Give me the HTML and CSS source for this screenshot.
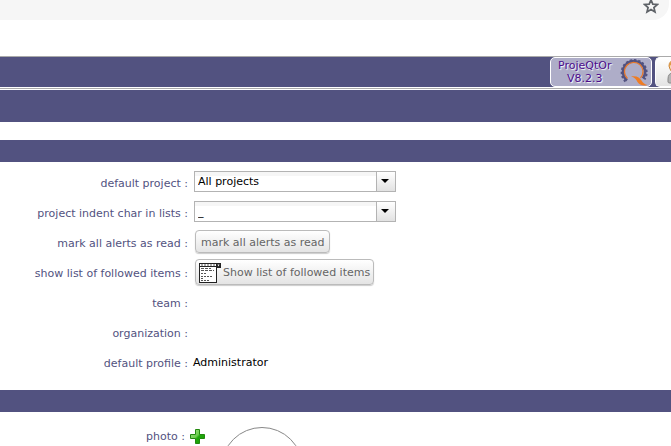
FILE: index.html
```
<!DOCTYPE html>
<html lang="en">
<head>
  <meta charset="UTF-8" />
  <meta name="viewport" content="width=device-width, initial-scale=1.0"/>
  <title>User parameters</title>
  <link rel="stylesheet" href="styles.css">
</head>
<body>
  <div class="address-row">
    <div class="address-bar">
      <button class="star" aria-label="Bookmark this page">
        <svg width="16" height="16" viewBox="0 0 16 16"><path d="M8 1.8 L9.8 6.1 L14.4 6.5 L10.9 9.5 L12 14 L8 11.6 L4 14 L5.1 9.5 L1.6 6.5 L6.2 6.1 Z" fill="none" stroke="#5f6368" stroke-width="1.7"/></svg>
      </button>
    </div>
  </div>

  <header class="top-bar">
    <a class="about" href="#">
      <span class="about-text">ProjeQtOr<br>V8.2.3</span>
      <svg class="about-logo" width="28" height="28" viewBox="0 0 28 28">
        <path d="M7 22.500 A11 11 0 1 1 23 20.500" fill="none" stroke="#525280" stroke-width="2.600"/>
        <path d="M5.500 23.500 A12.500 12.500 0 1 1 24.500 21.500" fill="none" stroke="#525280" stroke-width="2" stroke-dasharray="2.300 1.900"/>
        <path d="M7.500 20.500 A9.300 9.300 0 1 1 20.500 20" fill="none" stroke="#e8782a" stroke-width="1.300"/>
        <path d="M11 18.500 C17 17.500 19.500 19.500 21.500 22.500 C23 25 25 26.500 27.500 27 C23 28.500 19.500 27 17.500 24 C16 21 14.500 19.500 11 18.500 Z" fill="#ee7c24"/>
      </svg>
    </a>
    <button class="user" aria-label="User menu">
      <svg width="22" height="26" viewBox="0 0 22 26">
        <path d="M1 23 V20 Q1 14 6 14 H16 Q21 14 21 19 V24 H3 Q1 24 1 23 Z" fill="#b5b5b5" stroke="#888"/>
        <path d="M2 7 Q2 1 9 1 Q16 1 16 7 Q16 14 9 15 Q4 14 3 10 Z" fill="#f7dcb4" stroke="#c98235"/>
        <path d="M2 8 Q2 1 9 1 Q16 1 16 8 Q12 4 9 4 Q5 4 2 8 Z" fill="#e09a45"/>
      </svg>
    </button>
  </header>
  <div class="title-bar"></div>

  <main>
    <div class="section-title"></div>
    <section class="fields">
      <div class="row">
        <label class="name" for="project">default project&nbsp;:</label>
        <select class="combo" id="project"><option>All projects</option></select>
      </div>
      <div class="row">
        <label class="name" for="indent">project indent char in lists&nbsp;:</label>
        <select class="combo" id="indent"><option>_</option></select>
      </div>
      <div class="row">
        <label class="name" for="alerts">mark all alerts as read&nbsp;:</label>
        <button class="btn" id="alerts">mark all alerts as read</button>
      </div>
      <div class="row">
        <label class="name" for="followed">show list of followed items&nbsp;:</label>
        <button class="btn btn-icon" id="followed">
          <svg width="22" height="20" viewBox="0 0 22 20">
            <rect x="0.500" y="0.500" width="17" height="19" fill="#fff" stroke="#222"/>
            <path d="M0 3.500H18" stroke="#222"/>
            <rect x="17" y="0" width="5" height="5" fill="#222"/>
            <path d="M18.500 1.500H20.500L19.500 3.500Z" fill="#fff"/>
            <path d="M2 2H16" stroke="#555" stroke-dasharray="2 1"/>
            <path d="M2 5.500H12M2 7.500H15" stroke="#555" stroke-dasharray="3 1"/>
            <path d="M2 10.500H7M2 13.500H13M2 15.500H5M2 17.500H10" stroke="#555" stroke-dasharray="2 1"/>
          </svg>
          Show list of followed items
        </button>
      </div>
      <div class="row">
        <span class="name">team&nbsp;:</span>
      </div>
      <div class="row">
        <span class="name">organization&nbsp;:</span>
      </div>
      <div class="row">
        <span class="name">default profile&nbsp;:</span>
        <span class="value">Administrator</span>
      </div>
    </section>

    <div class="section-title"></div>
    <section class="photo">
      <label class="name photo-name" for="add">photo&nbsp;:</label>
      <button class="add" id="add">
        <svg width="15" height="15" viewBox="0 0 15 15">
          <defs>
            <linearGradient id="green" x1="0" y1="0" x2="1" y2="1">
              <stop offset="0" stop-color="#a5e38a"/>
              <stop offset="0.450" stop-color="#6ccf4c"/>
              <stop offset="0.550" stop-color="#1fa80a"/>
              <stop offset="1" stop-color="#1c9a08"/>
            </linearGradient>
          </defs>
          <path d="M5.500 0.500H9.500V5.500H14.500V9.500H9.500V14.500H5.500V9.500H0.500V5.500H5.500Z" fill="url(#green)" stroke="#23890f"/>
        </svg>
      </button>
      <div class="thumb"></div>
    </section>
  </main>
</body>
</html>
```

FILE: styles.css
```
* {
  box-sizing: border-box;
}

body {
  margin: 0;
  background: #fff;
  font-family: Verdana, "DejaVu Sans", sans-serif;
  font-size: 11px;
  color: #000;
  overflow: hidden;
}

button {
  font: inherit;
  cursor: pointer;
}

svg {
  display: block;
}

.address-row {
  height: 56px;
  padding-right: 2px;
}

.address-bar {
  display: flex;
  justify-content: flex-end;
  height: 20px;
  padding-right: 10px;
  background: #f6f6f6;
  border-bottom-right-radius: 16px;
}

.star {
  height: 16px;
  padding: 0;
  margin-top: -2px;
  border: none;
  background: none;
}

.top-bar {
  display: flex;
  justify-content: flex-end;
  gap: 3px;
  height: 32px;
  overflow: hidden;
  background: #525280;
  border-top: 1px solid #aaa;
  border-bottom: 1px solid #fff;
}

.about {
  display: flex;
  align-items: center;
  justify-content: space-between;
  width: 102px;
  height: 30px;
  padding: 0 3px 0 7px;
  border: 1px solid #fff;
  border-radius: 5px;
  background: #aeadc8;
  color: #4b0d8c;
  text-decoration: none;
}

.about-text {
  line-height: 13px;
  text-align: center;
  text-shadow: 1px 1px 1px #fff;
}

.user {
  width: 16px;
  height: 30px;
  padding: 0 0 0 11px;
  border: 1px solid #fff;
  border-right: none;
  border-radius: 5px 0 0 5px;
  background: linear-gradient(#fff, #e4e4e4);
  overflow: hidden;
}

.title-bar {
  height: 34px;
  margin-bottom: 18px;
  background: #525280;
  border-top: 1px solid #aaa;
  box-shadow: inset 0 1px #fff;
}

.section-title {
  height: 22px;
  background: #525280;
}

.fields {
  padding: 6px 0 12px;
}

.row {
  display: flex;
  align-items: center;
  height: 30px;
}

.name {
  width: 188px;
  margin-right: 6px;
  text-align: right;
  color: #525280;
}

.combo {
  width: 202px;
  height: 21px;
  padding: 0 24px 0 3px;
  margin-bottom: 3px;
  border: 1px solid #b3b3b3;
  border-radius: 0;
  appearance: none;
  background:
    url("data:image/svg+xml,%3Csvg xmlns='http://www.w3.org/2000/svg' width='8' height='4'%3E%3Cpath d='M0 0H8L4 4Z'/%3E%3C/svg%3E") right 6px top 7px no-repeat,
    linear-gradient(#b3b3b3, #b3b3b3) right 18px top / 1px 100% no-repeat,
    linear-gradient(#fff, #e2e2e2) right / 18px 100% no-repeat,
    linear-gradient(#f6f6f6, #f6f6f6) top / 100% 4px no-repeat,
    #fff;
  font: inherit;
  color: #000;
}

.btn {
  display: flex;
  align-items: center;
  gap: 2px;
  height: 23px;
  padding: 2px 4px 0 5px;
  margin: 0 0 3px 1px;
  border: 1px solid #bbb;
  border-radius: 4px;
  background: linear-gradient(#fff, #e4e4e4);
  box-shadow: 0 1px 1px #ccc;
  color: #656565;
}

.btn-icon {
  height: 26px;
  padding: 1px 3px 0;
  margin-bottom: 2px;
}

.value {
  margin: 0 0 2px -1px;
}

.photo {
  display: flex;
  padding-top: 15px;
}

.photo-name {
  width: 185px;
  margin: 3px 5px 0 0;
}

.add {
  height: 15px;
  padding: 0;
  margin-top: 2px;
  border: none;
  background: none;
}

.thumb {
  width: 82px;
  height: 82px;
  margin-left: 16px;
  border: 1px solid #888;
  border-radius: 50%;
}
```
